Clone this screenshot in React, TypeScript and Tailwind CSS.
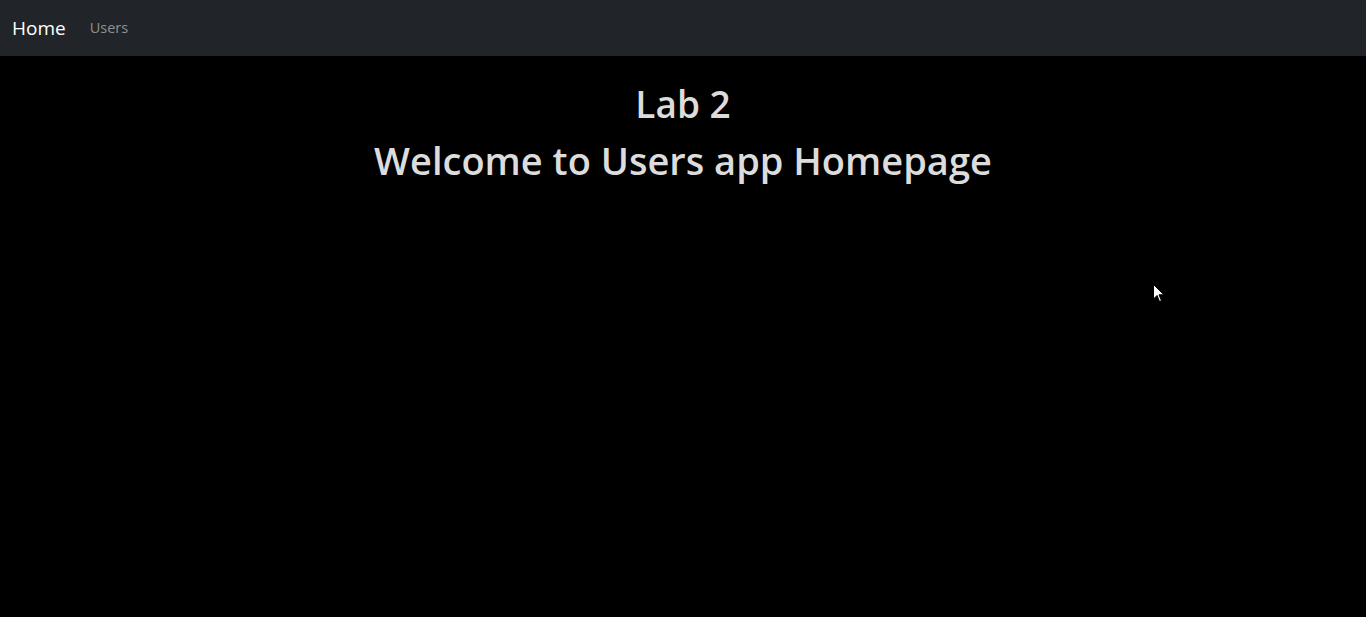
export default function App() {
  return (
    <div className="flex min-h-[617px] flex-col bg-black font-['Open_Sans','Noto_Sans',sans-serif]">
      <nav className="flex h-14 items-center bg-[#212529] px-3">
        <a className="mr-4 text-[19px] leading-none text-white">Home</a>
        <a className="px-2 text-[14.5px] leading-none text-[#8f9194]">Users</a>
      </nav>

      <main className="relative flex flex-1 flex-col items-center pt-[25px] text-[#dcdcdc]">
        <h1 className="text-[37px] leading-[46px] font-semibold">Lab 2</h1>
        <h2 className="mt-[10px] text-[38px] leading-[46px] font-semibold">
          Welcome to Users app Homepage
        </h2>

        {/* mouse pointer caught in the shot */}
        <svg
          className="absolute top-[228px] left-[1153px]"
          width="12"
          height="19"
          viewBox="0 0 12 19"
          aria-hidden
        >
          <path d="M0.5 0.5 L0.5 15 L4 11.5 L6.5 17.5 L8.5 16.6 L6 10.8 L11 10.8 Z" fill="#fff" stroke="#000" strokeWidth="1" />
        </svg>
      </main>
    </div>
  )
}
